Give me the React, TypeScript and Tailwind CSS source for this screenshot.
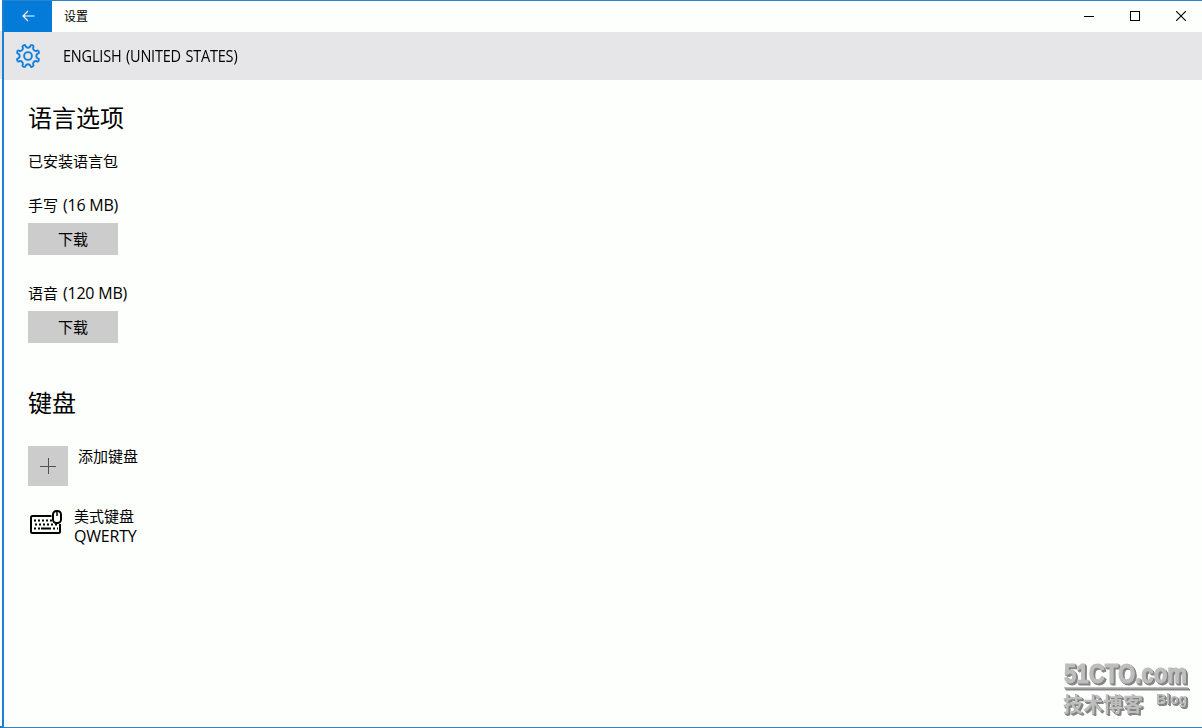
import type { ReactNode } from 'react';

const downloads = [
  { id: 'handwriting', name: '手写', size: '(16 MB)' },
  { id: 'speech', name: '语音', size: '(120 MB)' },
];

const Gear = () => (
  <svg width="26" height="26" viewBox="-13 -13 26 26" fill="none" stroke="#1080dc" strokeWidth="1.9" strokeLinejoin="round">
    {[0, 45, 90, 135, 180, 225, 270, 315].map((angle) => (
      <path
        key={angle}
        transform={`rotate(${angle})`}
        d="M-5.400 -10.200 L-3.600 -11 Q-2.700 -11.100 -2.400 -9.800 Q-1.600 -8.300 0 -8.300 Q1.600 -8.300 2.400 -9.800 Q2.700 -11.100 3.600 -11"
      />
    ))}
    <circle r="3.900" />
  </svg>
);

const KeyboardMouse = () => (
  <svg width="34" height="28" viewBox="0 0 34 28" fill="none" stroke="#000">
    <path d="M22.5 7H3.5Q2 7 2 8.500V22.500Q2 24 3.500 24H29.500Q31 24 31 22.500V15" strokeWidth="2" />
    <path d="M5 11.500H23M6 15.500H29" strokeWidth="1.800" strokeDasharray="2 2" />
    <path d="M5 19.500H7M9 19.500H11M12 19.500H22M24 19.500H26M28 19.500H29" strokeWidth="1.800" />
    <rect x="24" y="2" width="8" height="12" rx="3.500" fill="#fdfffc" strokeWidth="2" />
    <path d="M28 2V7" strokeWidth="1.500" />
  </svg>
);

const Heading = ({ children }: { children: ReactNode }) => (
  <h2 className="h-9 text-[24px] leading-9 whitespace-nowrap">{children}</h2>
);

const WindowControls = () => (
  <div className="-mr-0.5 mb-px flex h-[30px] text-black">
    <button className="flex w-[46px] items-center justify-center" aria-label="Minimize">
      <svg width="10" height="10" shapeRendering="crispEdges"><path d="M0 5.500H10" stroke="currentColor" /></svg>
    </button>
    <button className="flex w-[46px] items-center justify-center" aria-label="Maximize">
      <svg width="10" height="10" fill="none" shapeRendering="crispEdges"><rect x=".5" y=".5" width="9" height="9" stroke="currentColor" /></svg>
    </button>
    <button className="flex w-[46px] items-center justify-center" aria-label="Close">
      <svg width="10" height="10"><path d="M0 0L10 10M10 0L0 10" stroke="currentColor" strokeWidth="1.1" /></svg>
    </button>
  </div>
);

// Embossed site mark in the lower right corner
const Watermark = () => (
  <div className="absolute right-[13px] bottom-[10px] w-[125px] text-[#bebebe] [filter:drop-shadow(1px_1px_0_#858585)_drop-shadow(1px_1px_0_#858585)]">
    <svg width="125" height="36" viewBox="0 -2 125 36" className="block overflow-visible" fill="currentColor">
      <text x="0" y="27" fontSize="28" fontFamily="'Liberation Sans Narrow', 'Liberation Sans', sans-serif" fontWeight="700" textLength="123" lengthAdjust="spacingAndGlyphs" stroke="currentColor" strokeWidth="1">51CTO.com</text>
      <rect x="0" y="31" width="124" height="1.500" />
    </svg>
    <div className="flex items-start justify-between font-bold">
      <span className="-ml-px font-['Noto_Sans_CJK_SC',sans-serif] text-[20px] leading-7">技术博客</span>
      <span className="mr-0.5 font-['Liberation_Sans',sans-serif] text-[14px] leading-[18px]">Blog</span>
    </div>
  </div>
);

export default function App() {
  return (
    <div className="relative flex h-[728px] w-[1202px] overflow-hidden bg-[#fdfffc] font-['Open_Sans','Noto_Sans_CJK_SC',sans-serif] text-[15px] text-black">
      <div className="flex w-[2px] flex-col">
        <div className="mt-[31px] h-12 bg-[#e6e5e7]" />
        <div className="mt-auto h-[2px] bg-[#1c7cd0]" />
      </div>
      <div className="flex min-w-0 flex-1 flex-col border-t border-b border-l-2 border-t-[#2b83cd] border-b-[#2b83cd] border-l-[#1c7fd5]">
        <header className="flex h-[31px] shrink-0 items-center">
          <button className="flex h-[31px] w-12 items-center justify-center bg-[#047bd8] text-white" aria-label="Back">
            <svg width="13" height="12" fill="none" stroke="currentColor" strokeWidth="1.2" className="mb-px">
              <path d="M12.500 6H1M6 1L1 6L6 11" />
            </svg>
          </button>
          <span className="ml-3 flex-1 text-[12px] leading-4">设置</span>
          <WindowControls />
        </header>

        <div className="flex h-12 shrink-0 items-center bg-[#e6e5e7] pl-[11px]">
          <Gear />
          <h1 className="ml-[22px] origin-left scale-x-[0.905] text-[16px] leading-6 tracking-[-0.2px] [word-spacing:1px] whitespace-nowrap">
            ENGLISH (UNITED STATES)
          </h1>
        </div>

        <main className="flex flex-col items-start pt-5 pl-6">
          <Heading>语言选项</Heading>
          <p className="mt-[15px] h-5 leading-5">已安装语言包</p>
          {downloads.map((item) => (
            <section key={item.id} className="mt-6 h-16">
              <p className="h-5 leading-5 whitespace-nowrap">
                {item.name} <span className="ml-px text-[16px] leading-none tracking-[-0.2px]">{item.size}</span>
              </p>
              <button className="mt-2 block h-8 w-[90px] bg-[#cccccc] leading-8">下载</button>
            </section>
          ))}

          <div className="mt-[38px]">
            <Heading>键盘</Heading>
          </div>
          <div className="mt-[25px] flex h-10 gap-[10px]">
            <button className="flex size-10 items-center justify-center bg-[#cccccc]" aria-label="添加键盘">
              <svg width="16" height="16" stroke="#505050" shapeRendering="crispEdges"><path d="M0 8.500H16M8.500 0V16" /></svg>
            </button>
            <p className="h-5 leading-5">添加键盘</p>
          </div>
          <div className="mt-5 flex">
            <div className="mt-[3px] ml-px w-[45px]">
              <KeyboardMouse />
            </div>
            <div className="leading-5">
              <p>美式键盘</p>
              <p className="text-[16px] leading-5 tracking-[-0.2px]">QWERTY</p>
            </div>
          </div>
        </main>
      </div>
      <Watermark />
    </div>
  );
}
